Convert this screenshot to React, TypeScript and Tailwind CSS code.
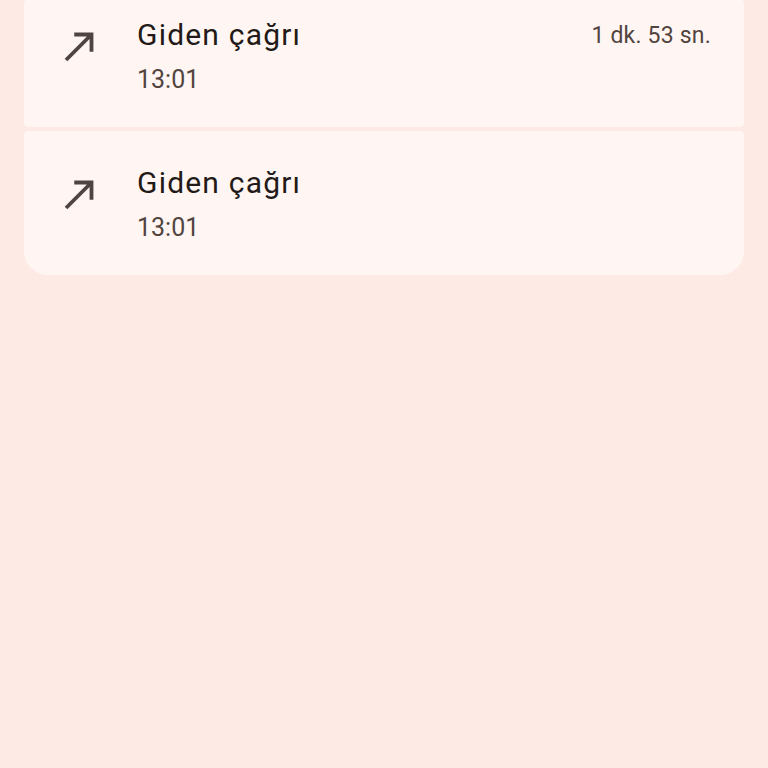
// Material "call_made" arrow
function CallMadeIcon() {
  return (
    <svg viewBox="0 0 24 24" className="w-[46px] h-[46px] shrink-0 text-[#4f4441]" fill="currentColor">
      <path d="M9 5v2h6.59L4 18.59 5.41 20 17 8.41V15h2V5z" />
    </svg>
  );
}

function CallRow({
  title,
  time,
  duration,
  className,
}: {
  title: string;
  time: string;
  duration?: string;
  className: string;
}) {
  return (
    <div className={`bg-[#fff6f3] flex items-start h-[144px] pl-[33px] pr-[33px] pt-[34px] ${className}`}>
      <div className="pt-[6px]">
        <CallMadeIcon />
      </div>
      <div className="ml-[34px] flex-1">
        <div className="text-[30px] leading-[36px] text-[#231a18] tracking-[1.2px]">{title}</div>
        <div className="mt-[11px] text-[25px] leading-[32px] text-[#52443f]">{time}</div>
      </div>
      {duration && (
        <div className="text-[23px] leading-[36px] pt-[1px] text-[#52443f] tracking-[0.2px]">{duration}</div>
      )}
    </div>
  );
}

export default function App() {
  return (
    <div
      className="w-[768px] h-[768px] overflow-hidden bg-[#fdeae4]"
      style={{ fontFamily: 'Roboto, "Noto Sans", sans-serif' }}
    >
      <div className="px-[24px] -mt-[17px] flex flex-col gap-[4px]">
        <CallRow title="Giden çağrı" time="13:01" duration="1 dk. 53 sn." className="rounded-t-[24px] rounded-b-[4px]" />
        <CallRow title="Giden çağrı" time="13:01" className="rounded-t-[4px] rounded-b-[24px]" />
      </div>
    </div>
  );
}
